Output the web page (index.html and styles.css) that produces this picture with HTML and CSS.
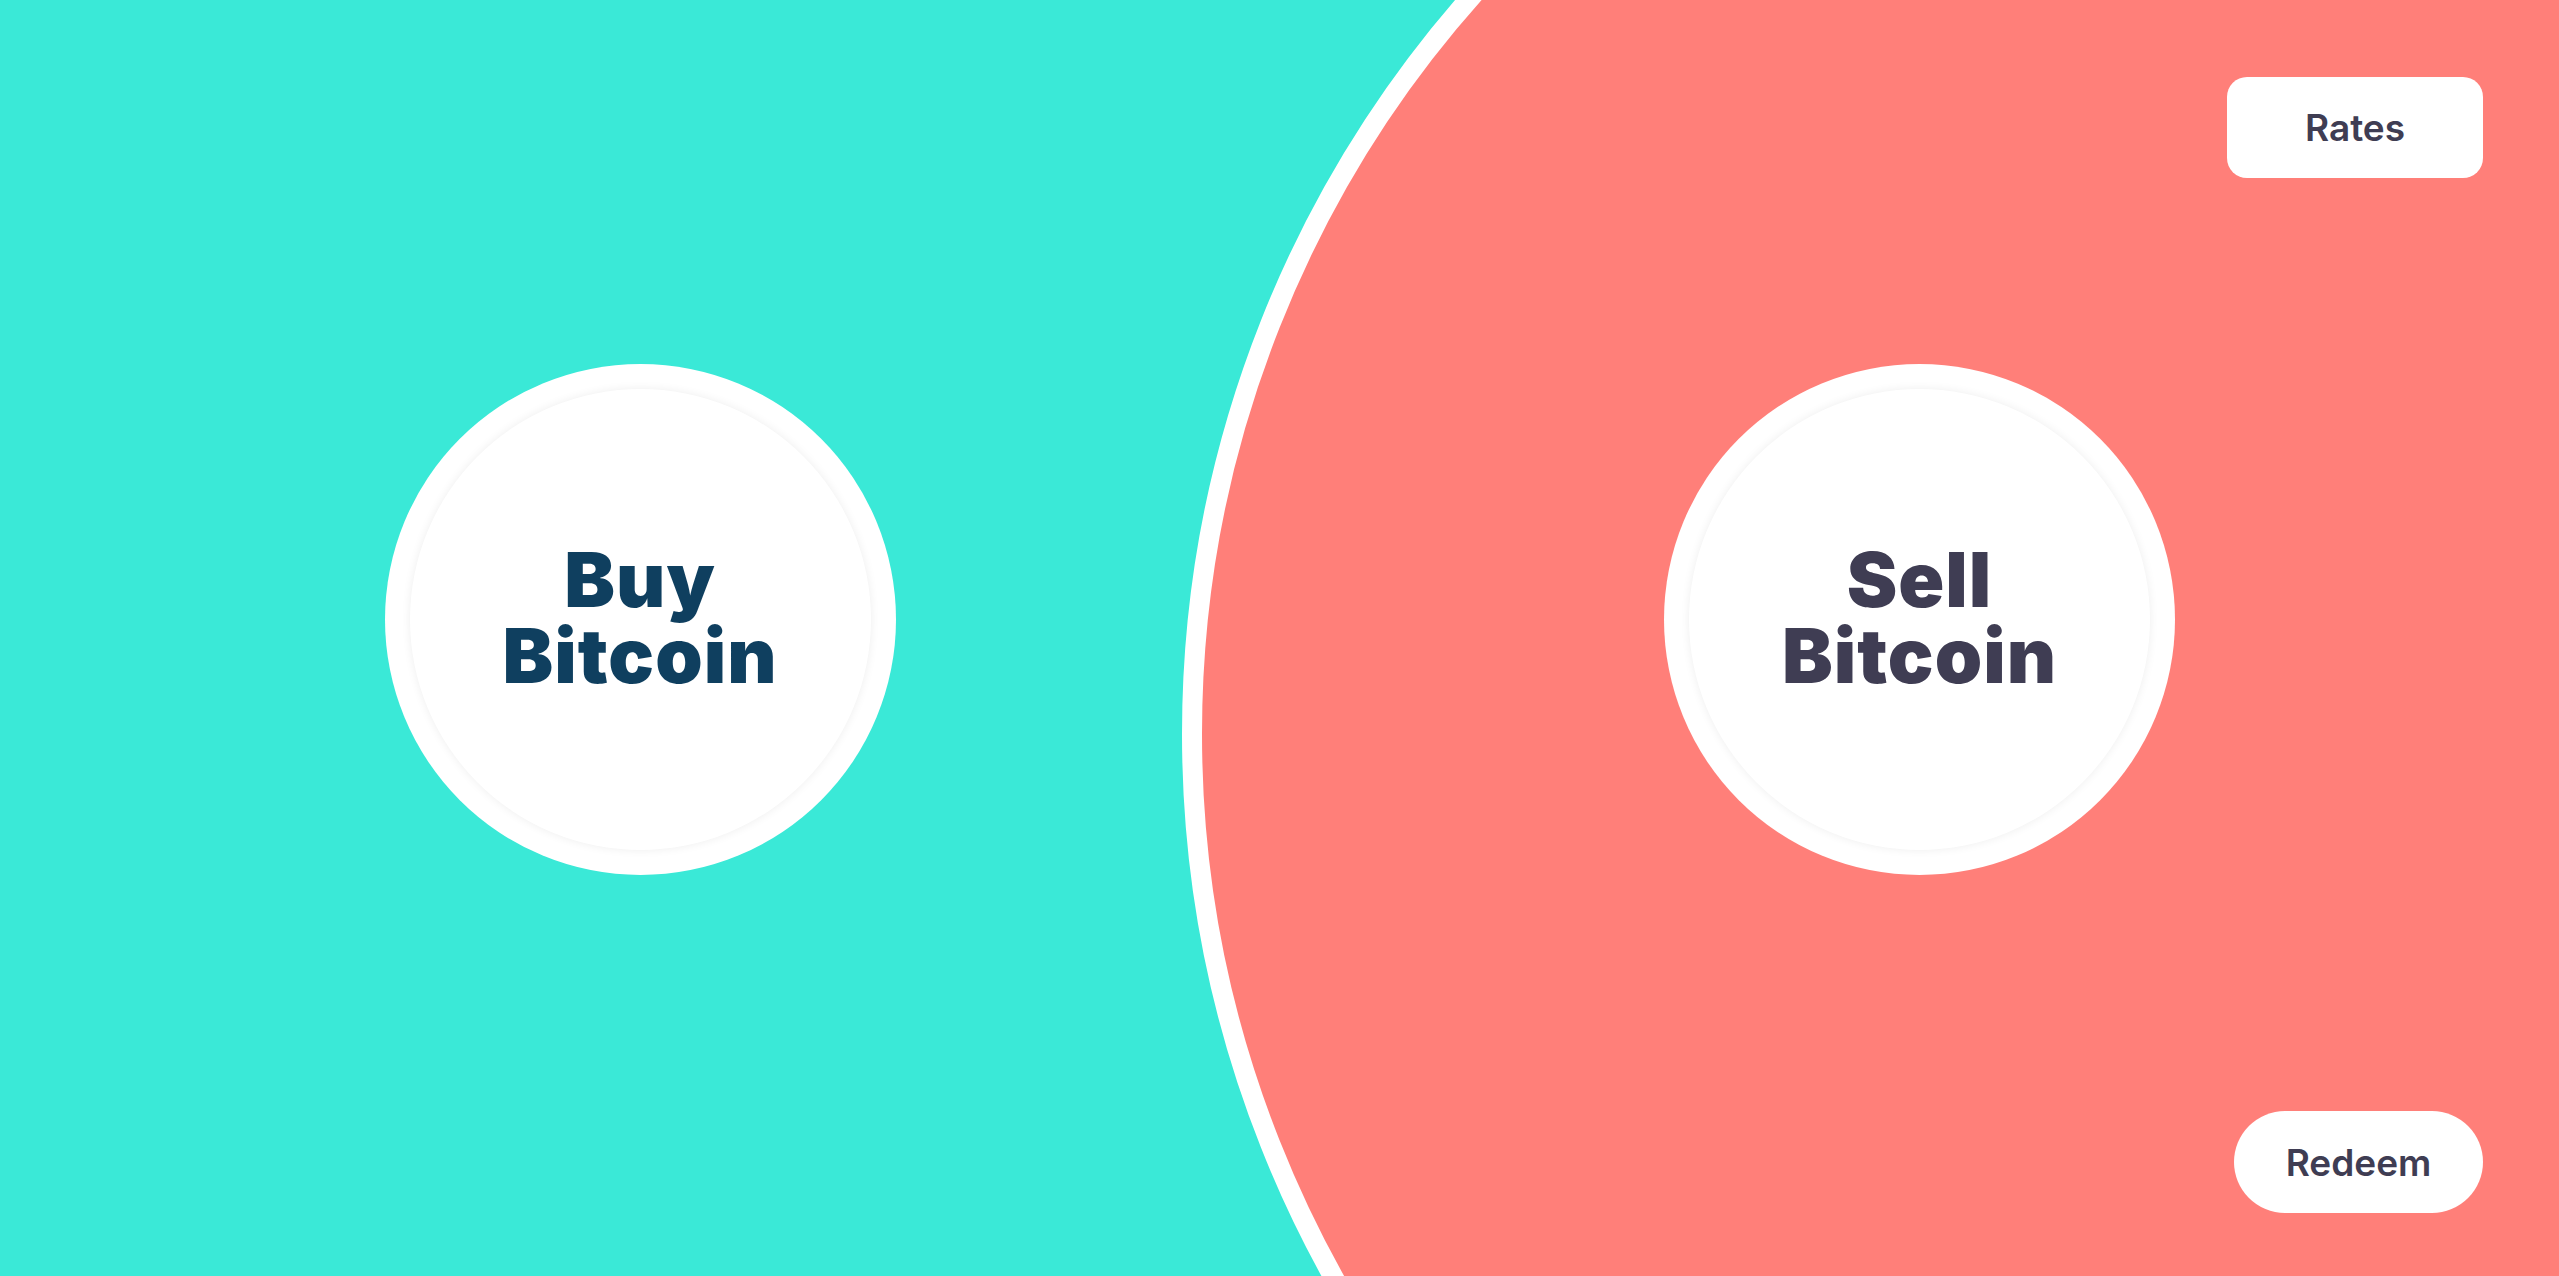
FILE: index.html
```html
<!DOCTYPE html>
<html lang="en">
<head>
<meta charset="utf-8">
<title>Buy / Sell Bitcoin</title>
<link rel="stylesheet" href="styles.css">
</head>
<body>
<div class="app">
  <div class="split"></div>
  <div class="panels">
    <section class="panel panel-buy">
      <a class="coin coin-buy" href="#"><span class="coin-inner"><span class="coin-label"><span class="coin-line">Buy</span><span class="coin-line">Bitcoin</span></span></span></a>
    </section>
    <section class="panel panel-sell">
      <a class="coin coin-sell" href="#"><span class="coin-inner"><span class="coin-label"><span class="coin-line">Sell</span><span class="coin-line">Bitcoin</span></span></span></a>
    </section>
  </div>
  <nav class="actions">
    <a class="btn btn-rates" href="#">Rates</a>
    <a class="btn btn-redeem" href="#">Redeem</a>
  </nav>
</div>
</body>
</html>
```
FILE: styles.css
```css
* { box-sizing: border-box; }
html, body { margin: 0; padding: 0; }
body {
  font-family: Inter, "Noto Sans", "Liberation Sans", sans-serif;
  background: #3ae9d7;
}
a { text-decoration: none; }
.app {
  position: relative;
  width: 2559px;
  height: 1276px;
  overflow: hidden;
  background: #3ae9d7;
}
.split {
  position: absolute;
  left: 1182px;
  top: -389px;
  width: 2246px;
  height: 2246px;
  border-radius: 50%;
  border: 20px solid #ffffff;
  background: #ff7f79;
}
.panels {
  position: relative;
  display: flex;
  height: 100%;
  padding-bottom: 37px;
}
.panel {
  display: flex;
  align-items: center;
  justify-content: center;
}
.panel-buy { width: 1280px; }
.panel-sell { flex: 1; }
.coin {
  width: 511px;
  height: 511px;
  border-radius: 50%;
  background: #ffffff;
  display: flex;
  align-items: center;
  justify-content: center;
}
.coin-inner {
  width: 461px;
  height: 461px;
  border-radius: 50%;
  background: #ffffff;
  box-shadow: 0 0 10px rgba(0, 0, 0, 0.07);
  display: flex;
  align-items: center;
  justify-content: center;
}
.coin-label {
  display: flex;
  flex-direction: column;
  align-items: center;
  font-weight: 900;
  font-size: 76px;
  line-height: 76px;
  letter-spacing: 1px;
  text-align: center;
  padding-bottom: 6px;
}
.coin-line { display: block; }
.coin-buy .coin-label { color: #0f3f5f; }
.coin-sell .coin-label { color: #3f3d53; }
.actions {
  position: absolute;
  top: 77px;
  right: 76px;
  bottom: 63px;
  display: flex;
  flex-direction: column;
  justify-content: space-between;
  align-items: flex-end;
}
.btn {
  display: flex;
  align-items: center;
  justify-content: center;
  background: #ffffff;
  color: #3f3d53;
  font-weight: 600;
  font-size: 37px;
}
.btn-rates {
  width: 256px;
  height: 101px;
  border-radius: 20px;
}
.btn-redeem {
  width: 249px;
  height: 102px;
  border-radius: 51px;
}
```
